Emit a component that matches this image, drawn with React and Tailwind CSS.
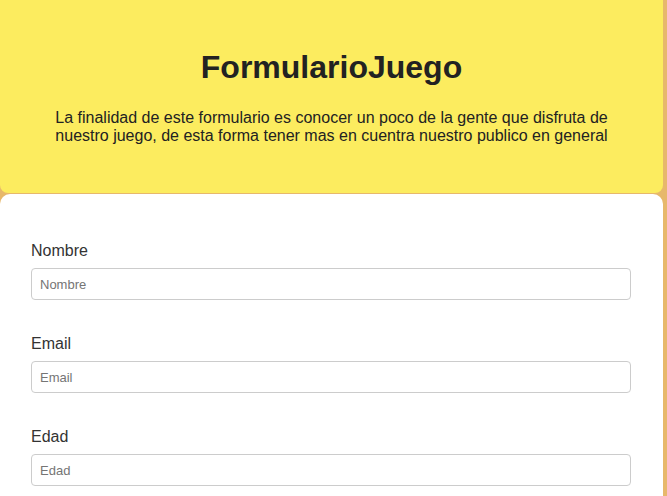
import React from 'react';

const fields = ['Nombre', 'Email', 'Edad'];

export default function App() {
  return (
    <div className="min-h-screen bg-[#e7b86b] font-['Liberation_Sans',Arial,sans-serif]">
      <div className="w-[663px]">
        {/* header */}
        <div className="bg-[#fcec5f] rounded-b-[8px] pt-[49px] pb-[48px] text-[#222]">
          <h1 className="text-[32px] font-bold text-center leading-[37px]">FormularioJuego</h1>
          <p className="mt-[23px] mx-auto w-[560px] text-center text-[16px] leading-[18px]">
            La finalidad de este formulario es conocer un poco de la gente que disfruta de nuestro juego, de esta forma tener mas en cuentra nuestro publico en general
          </p>
        </div>

        {/* form card */}
        <div className="mt-px bg-white rounded-t-[10px] pt-[48px] pl-[31px] pr-[32px] pb-[40px]">
          {fields.map((f) => (
            <div key={f} className="mb-[35px]">
              <label className="block text-[16px] leading-[18px] text-[#333]">{f}</label>
              <input
                type="text"
                placeholder={f}
                className="mt-[8px] block w-full h-[32px] px-[8px] text-[13px] border border-[#ccc] rounded-[4px] placeholder:text-[#757575] outline-none"
              />
            </div>
          ))}
        </div>
      </div>
    </div>
  );
}
